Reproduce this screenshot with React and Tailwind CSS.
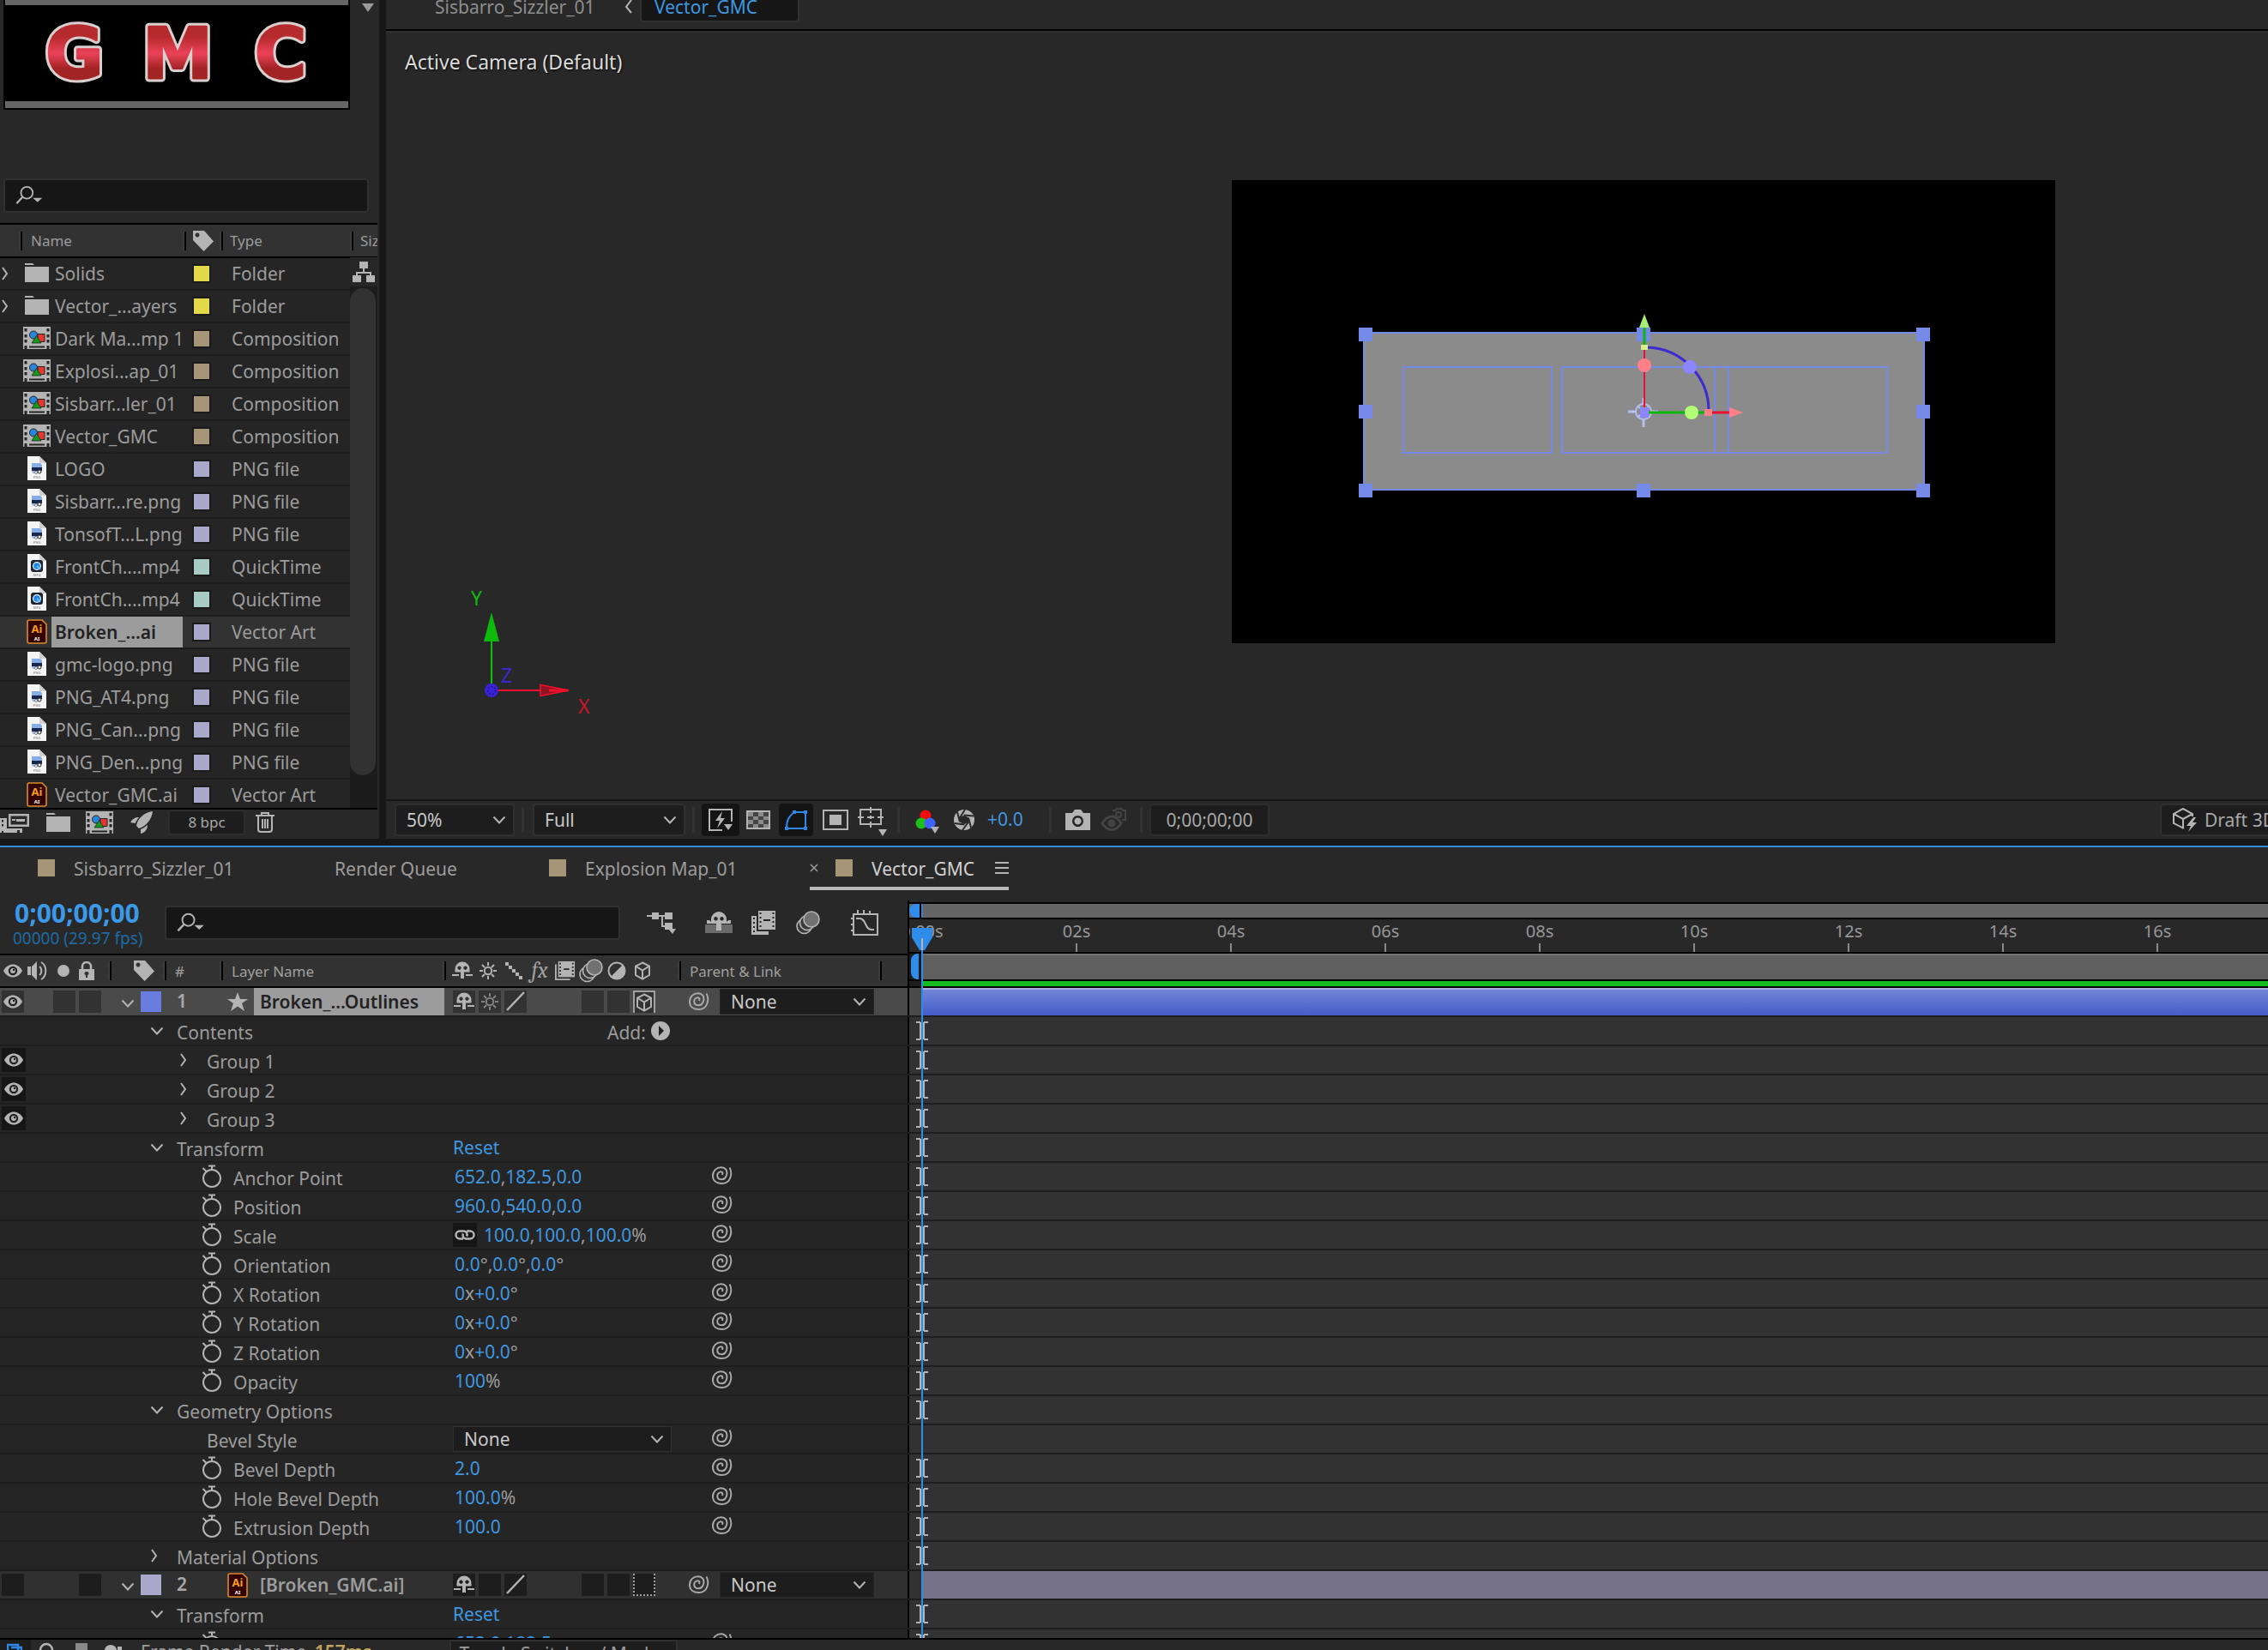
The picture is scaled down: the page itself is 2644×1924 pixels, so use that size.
import { useState } from "react";

const projectItems = [
  { name: "Solids", kind: "folder", color: "bg-[#e2d84a]", type: "Folder" },
  { name: "Vector_...ayers", kind: "folder", color: "bg-[#e2d84a]", type: "Folder" },
  { name: "Dark Ma...mp 1", kind: "comp", color: "bg-[#a79577]", type: "Composition" },
  { name: "Explosi...ap_01", kind: "comp", color: "bg-[#a79577]", type: "Composition" },
  { name: "Sisbarr...ler_01", kind: "comp", color: "bg-[#a79577]", type: "Composition" },
  { name: "Vector_GMC", kind: "comp", color: "bg-[#a79577]", type: "Composition" },
  { name: "LOGO", kind: "png", color: "bg-[#aaa8ca]", type: "PNG file" },
  { name: "Sisbarr...re.png", kind: "png", color: "bg-[#aaa8ca]", type: "PNG file" },
  { name: "TonsofT...L.png", kind: "png", color: "bg-[#aaa8ca]", type: "PNG file" },
  { name: "FrontCh....mp4", kind: "mp4", color: "bg-[#a9cbc6]", type: "QuickTime" },
  { name: "FrontCh....mp4", kind: "mp4", color: "bg-[#a9cbc6]", type: "QuickTime" },
  { name: "Broken_...ai", kind: "ai", color: "bg-[#aaa8ca]", type: "Vector Art" },
  { name: "gmc-logo.png", kind: "png", color: "bg-[#aaa8ca]", type: "PNG file" },
  { name: "PNG_AT4.png", kind: "png", color: "bg-[#aaa8ca]", type: "PNG file" },
  { name: "PNG_Can...png", kind: "png", color: "bg-[#aaa8ca]", type: "PNG file" },
  { name: "PNG_Den...png", kind: "png", color: "bg-[#aaa8ca]", type: "PNG file" },
  { name: "Vector_GMC.ai", kind: "ai", color: "bg-[#aaa8ca]", type: "Vector Art" },
];

// even parts of a value are editable (blue), odd parts are units and separators
const properties = [
  { label: "Contents", level: 0, open: true, add: true },
  { label: "Group 1", level: 1, open: false, eye: true },
  { label: "Group 2", level: 1, open: false, eye: true },
  { label: "Group 3", level: 1, open: false, eye: true },
  { label: "Transform", level: 0, open: true, reset: true },
  { label: "Anchor Point", level: 2, value: ["652.0", ",", "182.5", ",", "0.0"] },
  { label: "Position", level: 2, value: ["960.0", ",", "540.0", ",", "0.0"] },
  { label: "Scale", level: 2, linked: true, value: ["100.0", ",", "100.0", ",", "100.0", "%"] },
  { label: "Orientation", level: 2, value: ["0.0", "°,", "0.0", "°,", "0.0", "°"] },
  { label: "X Rotation", level: 2, value: ["0", "x", "+0.0", "°"] },
  { label: "Y Rotation", level: 2, value: ["0", "x", "+0.0", "°"] },
  { label: "Z Rotation", level: 2, value: ["0", "x", "+0.0", "°"] },
  { label: "Opacity", level: 2, value: ["100", "%"] },
  { label: "Geometry Options", level: 0, open: true },
  { label: "Bevel Style", level: 1, select: true, noKey: true },
  { label: "Bevel Depth", level: 2, value: ["2.0"] },
  { label: "Hole Bevel Depth", level: 2, value: ["100.0", "%"] },
  { label: "Extrusion Depth", level: 2, value: ["100.0"] },
  { label: "Material Options", level: 0, open: false },
];

const times = ["0:00s", "02s", "04s", "06s", "08s", "10s", "12s", "14s", "16s"];

/* ---------- icons ---------- */

function Chevron({ open, className = "" }) {
  return open ? (
    <svg width="16" height="16" viewBox="0 0 16 16" className={className} fill="none" stroke="#b4b4b4" strokeWidth="2">
      <path d="M1.500 4.500 8 11.500l6.500-7" />
    </svg>
  ) : (
    <svg width="16" height="16" viewBox="0 0 16 16" className={className} fill="none" stroke="#b4b4b4" strokeWidth="2">
      <path d="M3 1l5 7-5 7" />
    </svg>
  );
}

function SearchIcon() {
  return (
    <svg width="36" height="24" viewBox="0 0 36 24" fill="none" stroke="#b4b4b4" strokeWidth="2">
      <circle cx="14.500" cy="8.500" r="7.500" />
      <path d="M9 14l-7.500 8" strokeWidth="2.500" />
      <path d="M22 15h12l-6 5.500z" fill="#b4b4b4" stroke="none" />
    </svg>
  );
}

function TagIcon() {
  return (
    <svg width="24" height="24" viewBox="0 0 24 24" fill="#b4b4b4" fillRule="evenodd">
      <path d="M0 0h13l11 12.500L12.500 24 0 11zM5 2.500a2.500 2.500 0 1 0 .01 0z" />
    </svg>
  );
}

function FolderIcon() {
  return (
    <svg width="28" height="22" viewBox="0 0 28 22" fill="#b4b4b4">
      <path d="M0 0h9l2 2H0zM0 4h28v18H0z" />
    </svg>
  );
}

function CompIcon() {
  return (
    <svg width="32" height="26" viewBox="0 0 32 26">
      <path d="M0 0h32v26H0z" fill="#b4b4b4" />
      <path
        d="M1.500 2h3v3.500h-3zM1.500 9h3v3.500h-3zM1.500 15h3v3.500h-3zM1.500 22h3v4h-3zM27.500 2h3v3.500h-3zM27.500 9h3v3.500h-3zM27.500 15h3v3.500h-3zM27.500 22h3v4h-3zM7 22.500h18v2H7z"
        fill="#252525"
      />
      <path d="M17 8.500h8v9h-8z" fill="#e5372f" stroke="#252525" />
      <circle cx="12" cy="9.500" r="4.500" fill="#2b84dc" stroke="#252525" />
      <path d="M15.500 10.500l5.500 8.500H10z" fill="#129a1c" stroke="#252525" strokeWidth=".8" />
    </svg>
  );
}

function FileIcon({ kind }) {
  return (
    <svg width="22" height="28" viewBox="0 0 22 28">
      <path d="M0 0h14l8 8v20H0z" fill="#f4f4f4" />
      <path d="M14 0v8h8z" fill="#cfcfcf" />
      {kind === "png" ? (
        <g>
          <path d="M5 8h10l2 2v3H5z" fill="#86aee6" />
          <path d="M5 13h12v4H5z" fill="#16264f" />
          <path d="M5 17h7v3H6z" fill="#9db9e0" />
          <circle cx="14" cy="18" r="2" fill="#fff" stroke="#222" />
          <circle cx="10" cy="19" r="1.500" fill="#fff" stroke="#555" strokeWidth=".7" />
        </g>
      ) : (
        <g>
          <rect x="4" y="7" width="14" height="14" rx="3" fill="#1c2430" />
          <circle cx="11" cy="14" r="5" fill="#eef4fb" />
          <circle cx="11" cy="14" r="3.800" fill="#1d86e8" />
          <path d="M11 14l4 4" stroke="#5cc3ff" strokeWidth="2" />
        </g>
      )}
      <text x="11" y="26" fontSize="4" textAnchor="middle" fill="#777">
        {kind === "png" ? "PNG" : "MP4"}
      </text>
    </svg>
  );
}

function AiIcon() {
  return (
    <svg width="24" height="29" viewBox="0 0 24 29">
      <path d="M3 1h15l5 5v20a2 2 0 0 1-2 2H3a2 2 0 0 1-2-2V3a2 2 0 0 1 2-2z" fill="#330303" stroke="#d98b2e" strokeWidth="1.600" />
      <text x="12" y="16" fontSize="13" fontWeight="700" textAnchor="middle" fill="#f79a1e">Ai</text>
      <text x="12" y="25" fontSize="6" fontWeight="700" textAnchor="middle" fill="#fff">AI</text>
    </svg>
  );
}

function ItemIcon({ kind }) {
  if (kind === "folder") return <FolderIcon />;
  if (kind === "comp") return <CompIcon />;
  if (kind === "ai") return <AiIcon />;
  return <FileIcon kind={kind} />;
}

function EyeIcon() {
  return (
    <svg width="22" height="16" viewBox="0 0 22 16">
      <path d="M0 8C3 2.500 7 .5 11 .5S19 2.500 22 8c-3 5.500-7 7.500-11 7.500S3 13.500 0 8z" fill="#b4b4b4" />
      <circle cx="11" cy="8" r="5.200" fill="#222" />
      <circle cx="11" cy="8" r="3" fill="#b4b4b4" />
      <circle cx="12" cy="7" r="1.200" fill="#222" />
    </svg>
  );
}

function ShyIcon() {
  return (
    <svg width="24" height="22" viewBox="0 0 24 22" fill="#b4b4b4" fillRule="evenodd">
      <path d="M3.500 12.500V9a8.500 8.500 0 0 1 17 0v3.500H14V20h-4v-7.500zM8.500 5.500a2.200 2.200 0 1 0 .01 0zM15.500 5.500a2.200 2.200 0 1 0 .01 0z" />
      <path d="M0 15h8v2H0zM16 15h8v2h-8z" />
    </svg>
  );
}

function SunIcon({ dim }) {
  return (
    <svg width="22" height="22" viewBox="0 0 22 22" fill="none" stroke={dim ? "#828282" : "#b4b4b4"} strokeWidth="2">
      <circle cx="11" cy="11" r="4.200" />
      <path d="M11 1v4M11 17v4M1 11h4M17 11h4M4 4l3 3M15 15l3 3M4 18l3-3M15 7l3-3" />
    </svg>
  );
}

function FilmIcon() {
  return (
    <svg width="24" height="24" viewBox="0 0 26 26">
      <path d="M1 5v19h18" fill="none" stroke="#b4b4b4" strokeWidth="2" />
      <path d="M4 1h21v20H4z" fill="#b4b4b4" />
      <path d="M5.500 3h2v2h-2zM5.500 7.500h2v2h-2zM5.500 12h2v2h-2zM5.500 16.500h2v2h-2zM21.500 3h2v2h-2zM21.500 7.500h2v2h-2zM21.500 12h2v2h-2zM21.500 16.500h2v2h-2zM11 10h7v2h-7z" fill="#252525" />
    </svg>
  );
}

function BlurIcon() {
  return (
    <svg width="28" height="28" viewBox="0 0 28 28" fill="#3a3a3a" stroke="#b4b4b4" strokeWidth="1.600">
      <circle cx="9.500" cy="18" r="8.500" />
      <circle cx="13" cy="14" r="8.500" />
      <circle cx="18" cy="10" r="9" fill="#727272" />
    </svg>
  );
}

function CubeIcon() {
  return (
    <svg width="20" height="22" viewBox="0 0 20 22" fill="none" stroke="#b4b4b4" strokeWidth="2">
      <path d="M10 1.500l8 4v10.500l-8 4.500-8-4.500V5.500zM2 5.500l8 5 8-5M10 10.500v10" />
    </svg>
  );
}

function SpiralIcon() {
  return (
    <svg width="24" height="22" viewBox="0 0 24 22" fill="none" stroke="#a8a8a8" strokeWidth="2">
      <path d="M20.500 1.500c3.500 6 2 18.500-9 18.500C4.500 20 1 16 1 11 1 5 5.500 1.200 10.500 1.200c5.500 0 7.500 4 6.800 8-.8 4-3.300 6-6.300 6-3 0-4.800-2-4.800-4.600 0-2.600 2-4.400 4.300-4.400 2 0 2.300 1.800 1.500 3.800" />
    </svg>
  );
}

function Stopwatch() {
  return (
    <svg width="24" height="28" viewBox="0 0 24 28" fill="none" stroke="#b4b4b4" strokeWidth="2">
      <circle cx="12" cy="16" r="10" />
      <path d="M8 1.500h8M12 1.500V6M1.500 4l4 4" />
    </svg>
  );
}

function DownTri() {
  return (
    <svg width="10" height="8" viewBox="0 0 10 8" className="absolute -right-1 -bottom-1">
      <path d="M0 0h10L5 8z" fill="#b4b4b4" />
    </svg>
  );
}

function Logo() {
  const letters = (
    <>
      <text x="81" y="85">G</text>
      <text x="201" y="85">M</text>
      <text x="321" y="85">C</text>
    </>
  );
  return (
    <svg width="400" height="112" viewBox="0 0 400 112" className="block bg-black">
      <defs>
        <linearGradient id="logoRed" gradientUnits="userSpaceOnUse" x1="0" y1="24" x2="0" y2="86">
          <stop offset="20%" stopColor="#b52a2c" />
          <stop offset="52%" stopColor="#ea4258" />
          <stop offset="80%" stopColor="#a32425" />
        </linearGradient>
      </defs>
      <g fontFamily="DejaVu Sans" fontWeight="700" fontSize="82" textAnchor="middle" strokeLinejoin="round">
        <g fill="#d9cfcf" stroke="#d9cfcf" strokeWidth="9">{letters}</g>
        <g fill="url(#logoRed)" stroke="url(#logoRed)" strokeWidth="3">{letters}</g>
      </g>
    </svg>
  );
}

/* ---------- shared bits ---------- */

function Sep() {
  return <span className="h-[22px] w-1 shrink-0 border-r-2 border-l-2 border-r-black border-l-[#3c3c3c]" />;
}

function Dropdown({ label, value, options, className }) {
  const [current, setCurrent] = useState(value);
  return (
    <div className={`relative shrink-0 bg-[#1d1d1d] ${className}`}>
      <select
        aria-label={label}
        value={current}
        onChange={(e) => setCurrent(e.target.value)}
        className="h-full w-full appearance-none bg-transparent px-3 text-[21px] leading-7 text-[#c8c8c8] outline-none"
      >
        {options.map((o) => (
          <option key={o}>{o}</option>
        ))}
      </select>
      <Chevron open className="pointer-events-none absolute top-1/2 right-2 -translate-y-1/2" />
    </div>
  );
}

/* ---------- project panel ---------- */

function ProjectPanel() {
  const [selected, setSelected] = useState(11);
  return (
    <aside className="flex w-[442px] shrink-0 flex-col overflow-hidden bg-[#282828]">
      <div className="flex items-start gap-3.5 pl-1">
        <div className="border-x-2 border-b-2 border-black">
          <div className="h-1.5 bg-[#666]" />
          <Logo />
          <div className="h-2 bg-[#666]" />
        </div>
        <svg width="14" height="10" viewBox="0 0 14 10" className="mt-1">
          <path d="M0 0h14L7 10z" fill="#9a9a9a" />
        </svg>
      </div>

      <label className="mt-20 mr-3 ml-1 flex h-10 items-center rounded border-2 border-[#303030] bg-[#161616] pl-3">
        <SearchIcon />
        <input aria-label="Search project" className="w-full bg-transparent text-[21px] text-[#c8c8c8] outline-none" />
      </label>

      <div className="relative mt-3 mr-0.5 h-[684px] overflow-hidden border-y-2 border-black">
        <table className="w-full table-fixed border-collapse text-left text-[21px] text-[#9c9c9c]">
          <colgroup>
            <col className="w-[213px]" />
            <col className="w-[43px]" />
            <col className="w-[152px]" />
            <col />
          </colgroup>
          <thead>
            <tr className="h-[38px] border-b-2 border-black bg-[#323232] text-[17px]">
              <th className="p-0 font-normal">
                <div className="flex items-center gap-2.5 pl-[22px]"><Sep />Name</div>
              </th>
              <th className="p-0" aria-label="Label">
                <div className="flex items-center gap-2"><Sep /><TagIcon /></div>
              </th>
              <th className="p-0 font-normal">
                <div className="flex items-center gap-2"><Sep />Type</div>
              </th>
              <th className="p-0 font-normal">
                <div className="flex items-center gap-2 overflow-hidden"><Sep />Size</div>
              </th>
            </tr>
          </thead>
          <tbody>
            {projectItems.map((item, i) => (
              <tr
                key={i}
                onClick={() => setSelected(i)}
                className={`h-[38px] ${i === selected ? "bg-[#323232]" : "bg-[#252525]"}`}
              >
                <td className="border-b-2 border-[#1d1d1d] p-0">
                  <div className="flex h-9 items-center whitespace-nowrap">
                    <span className="w-[22px] shrink-0">
                      {item.kind === "folder" && <Chevron />}
                    </span>
                    <span className="flex w-[38px] shrink-0 items-center justify-center pl-1 pb-0.5"><ItemIcon kind={item.kind} /></span>
                    <span
                      className={`h-full grow overflow-hidden pl-1 leading-9 ${
                        i === selected ? "bg-[#9c9c9c] font-semibold text-[#222]" : ""
                      }`}
                    >
                      {item.name}
                    </span>
                  </div>
                </td>
                <td className="border-b-2 border-[#1d1d1d] p-0 pl-[11px]">
                  <div className={`size-[22px] border-2 border-[#1a1a1a] ${item.color}`} />
                </td>
                <td className="border-b-2 border-[#1d1d1d] p-0 pl-[14px] leading-8 whitespace-nowrap">{item.type}</td>
                <td className="bg-[#1c1c1c] p-0" />
              </tr>
            ))}
          </tbody>
        </table>
        <div className="absolute top-[38px] right-0 w-8">
          <div className="flex h-[34px] items-center justify-center bg-[#262626]">
            <svg width="26" height="24" viewBox="0 0 26 24" fill="#b4b4b4">
              <path d="M8 0h10v8H8zM0 16h10v8H0zM16 16h10v8H16zM12 8h2v4h8v4h-2v-2H6v2H4v-4h8z" />
            </svg>
          </div>
          <div className="mt-0.5 mr-0.5 h-[568px] rounded-full bg-[#323232]" />
        </div>
      </div>

      <div className="flex h-[34px] items-center pb-1">
        <button aria-label="Interpret footage" className="w-[54px]">
          <svg width="34" height="24" viewBox="0 0 34 24" fill="#b4b4b4" fillRule="evenodd">
            <path d="M10 2h24v15H10zM12.500 4.500v10h19v-10zM14 8h4v2h-4zM19 8h10v3H19zM0 7h8v12h18v5h-3v-3h-3v3H4v-2H2v2H0zM2 9v2.500h2V9zM2 14v2.500h2V14z" />
          </svg>
        </button>
        <button aria-label="New folder" className="w-[46px]"><FolderIcon /></button>
        <button aria-label="New composition" className="w-[52px]"><CompIcon /></button>
        <button aria-label="Project settings" className="w-11">
          <svg width="26" height="26" viewBox="0 0 26 26" fill="#b4b4b4">
            <path d="M26 0C16 1 8 9 7 17l3 3C19 17 25 9 26 0zM0 13c3-5 6-6 10-6-2 3-4 5-4 7zM12 26v-5c3-1 5-3 8-5 0 5-3 9-8 10z" />
          </svg>
        </button>
        <button className="mr-3 h-[30px] w-[90px] rounded border-2 border-[#2d2d2d] bg-[#1d1d1d] text-[17px] leading-6 text-[#a8a8a8]">
          8 bpc
        </button>
        <button aria-label="Delete">
          <svg width="22" height="24" viewBox="0 0 22 24" fill="none" stroke="#b4b4b4" strokeWidth="2">
            <path d="M0 4h22M7 4V1h8v3M3 4v16a3 3 0 0 0 3 3h10a3 3 0 0 0 3-3V4M8 8v11M11 8v11M14 8v11" />
          </svg>
        </button>
      </div>
    </aside>
  );
}

/* ---------- viewer ---------- */

function Handle({ x, y }) {
  return <rect x={x - 8} y={y - 8} width="16" height="16" fill="#7489e8" />;
}

function Stage() {
  return (
    <svg width="960" height="540" viewBox="0 0 960 540" className="absolute top-[174px] left-[986px] bg-black">
      <rect x="154" y="178" width="653" height="183" fill="#8b8b8b" stroke="#7489e8" strokeWidth="2" />
      <g fill="none" stroke="#7489e8" strokeWidth="2">
        <rect x="200" y="218" width="173" height="100" />
        <rect x="385" y="218" width="194" height="100" />
        <rect x="563" y="218" width="201" height="100" />
      </g>
      {[156, 480, 806].map((x) =>
        [180, 270, 362].map((y) => (x === 480 && y === 270 ? null : <Handle key={x + "-" + y} x={x} y={y} />))
      )}
      <g fill="none" stroke="#b3bfee" strokeWidth="2">
        <circle cx="480" cy="270" r="9" />
        <path d="M480 254v8M480 278v10M462 270h9M489 270h8" strokeWidth="3" />
        <path d="M473 263l4 4M487 263l-4 4M473 277l4-4M487 277l-4-4" />
      </g>
      <path d="M484 195a74 74 0 0 1 72 74" fill="none" stroke="#3e2bd0" strokeWidth="3" />
      <path d="M481 198v70" stroke="#e8112d" strokeWidth="2" />
      <path d="M481 172v24" stroke="#0cb70c" strokeWidth="3" />
      <path d="M481 156l6 16h-12z" fill="#a6ec75" />
      <path d="M477 192h8v6h-8z" fill="#d7f08a" />
      <path d="M486 271h70" stroke="#0cb70c" strokeWidth="3" />
      <path d="M551 267h9v8h-9z" fill="#ff8086" />
      <path d="M560 271h20" stroke="#e8112d" strokeWidth="3" />
      <path d="M580 265l16 6-16 6z" fill="#ff8086" />
      <circle cx="481" cy="216" r="8" fill="#ff8086" />
      <circle cx="534" cy="218" r="8" fill="#8c85ff" />
      <circle cx="536" cy="271" r="8" fill="#b2ff77" />
      <path d="M476 265h10v12h-10z" fill="#8c85ff" />
    </svg>
  );
}

function AxisWidget() {
  return (
    <svg width="160" height="160" viewBox="0 0 160 160" className="absolute top-[644px] left-[90px]" fontSize="23">
      <path d="M33 62v56" stroke="#0cc30c" strokeWidth="2" />
      <path d="M33 34l9 34H24z" fill="#0cb90c" />
      <path d="M36 125h54" stroke="#f2102c" strokeWidth="2" />
      <path d="M90 118.500l33 6.500-33 6.500z" fill="#8f1522" stroke="#f2102c" strokeWidth="1.500" />
      <path d="M100 125h22" stroke="#f2102c" strokeWidth="3" />
      <circle cx="33" cy="125" r="8" fill="#3a21dc" />
      <circle cx="33" cy="125" r="4.500" fill="none" stroke="#201672" strokeWidth="1.500" strokeDasharray="2 2" />
      <text x="9" y="26" fill="#0cb90c">Y</text>
      <text x="44" y="116" fill="#3a29d0">Z</text>
      <text x="134" y="152" fill="#c9142b">X</text>
    </svg>
  );
}

function Divider() {
  return <span className="h-[30px] w-[3px] shrink-0 bg-[#323232]" />;
}

function ViewerToolbar() {
  return (
    <div className="flex h-[46px] shrink-0 items-center border-t-2 border-[#171717] pl-2.5">
      <Dropdown label="Magnification" value="50%" options={["25%", "50%", "100%"]} className="h-[38px] w-[140px] rounded border-2 border-[#303030]" />
      <span className="w-2" />
      <Divider />
      <span className="w-2.5" />
      <Dropdown label="Resolution" value="Full" options={["Full", "Half", "Third"]} className="h-[38px] w-[178px] rounded border-2 border-[#303030]" />
      <span className="w-2" />
      <Divider />
      <div className="flex items-center gap-2 pl-2">
        <button aria-label="Fast previews" className="flex h-[38px] w-11 items-center justify-center rounded bg-[#141414]">
          <svg width="30" height="26" viewBox="0 0 30 26" fill="none" stroke="#b4b4b4" strokeWidth="2">
            <path d="M17 25H2V1h26v14" />
            <path d="M17 3l-8 11h5l-3 9 9-12h-5z" fill="#b4b4b4" stroke="none" />
            <path d="M19 18h10l-5 7z" fill="#b4b4b4" stroke="none" />
          </svg>
        </button>
        <button aria-label="Toggle transparency grid" className="w-[30px]">
          <svg width="28" height="22" viewBox="0 0 28 22">
            <path d="M1 1h26v20H1z" fill="#444" stroke="#b4b4b4" strokeWidth="2" />
            <path d="M2 2h6v5H2zM14 2h6v5h-6zM8 7h6v4H8zM20 7h6v4h-6zM2 11h6v5H2zM14 11h6v5h-6zM8 16h6v4H8zM20 16h6v4h-6z" fill="#8a8a8a" />
          </svg>
        </button>
        <button aria-label="Toggle mask visibility" className="flex h-[38px] w-10 items-center justify-center rounded bg-[#141414]">
          <svg width="30" height="26" viewBox="0 0 30 26" fill="none" stroke="#2f88e6" strokeWidth="2">
            <path d="M13 4h13v19H4c0-9 2-14 9-19z" />
            <path d="M11 2h4v4h-4zM24 2h4v4h-4zM24 21h4v4h-4zM2 21h4v4H2z" fill="#2f88e6" stroke="none" />
          </svg>
        </button>
        <button aria-label="Region of interest" className="flex w-9 justify-center">
          <svg width="30" height="24" viewBox="0 0 30 24" fill="none" stroke="#b4b4b4" strokeWidth="2">
            <path d="M1 1h28v22H1z" />
            <path d="M9 7h12v10H9z" fill="#b4b4b4" />
          </svg>
        </button>
        <button aria-label="Guide options" className="relative w-[30px] pb-1">
          <svg width="30" height="26" viewBox="0 0 30 26" fill="none" stroke="#b4b4b4" strokeWidth="2">
            <path d="M3 3h24v17H3zM15 0v7M15 10v4M15 17v7M0 12h7M11 12h8M23 12h7" />
          </svg>
          <DownTri />
        </button>
      </div>
      <span className="w-4" />
      <Divider />
      <button aria-label="Show channel" className="relative mr-5 ml-[18px]">
        <svg width="24" height="24" viewBox="0 0 24 24">
          <circle cx="12" cy="7" r="6.500" fill="#f30d0d" />
          <circle cx="7" cy="16" r="6.500" fill="#1fc01a" />
          <circle cx="17" cy="16" r="6.500" fill="#3f62ff" />
        </svg>
        <DownTri />
      </button>
      <button aria-label="Reset exposure" className="mr-3.5">
        <svg width="26" height="26" viewBox="0 0 26 26">
          <circle cx="13" cy="13" r="12" fill="#b4b4b4" />
          <path d="M13 7.500l5 3v5l-5 3-5-3v-5z" fill="#282828" />
          <path d="M8 10.500L14 1M13 7.500l11 1M18 10.500L21 22M18 15.500L11 25M13 18.500L2 17M8 15.500L5 4" stroke="#282828" strokeWidth="2" fill="none" />
        </svg>
      </button>
      <span className="w-[72px] text-[21px] text-[#3f97e0]">+0.0</span>
      <Divider />
      <button aria-label="Take snapshot" className="mr-3 ml-4">
        <svg width="29" height="24" viewBox="0 0 29 24" fill="#b4b4b4" fillRule="evenodd">
          <path d="M0 4h8l3-4h7l3 4h8v20H0zM14.500 7a6.500 6.500 0 1 0 .01 0zM14.500 9.500a4 4 0 1 1-.01 0z" />
        </svg>
      </button>
      <button aria-label="Show snapshot" disabled className="mr-4">
        <svg width="30" height="28" viewBox="0 0 30 28" fill="none" stroke="#444" strokeWidth="3">
          <path d="M14 3h3l2-2h5l2 2h3v11h-4" strokeWidth="2" />
          <circle cx="21" cy="8" r="3" strokeWidth="2" />
          <path d="M2 18c3-5 7-8 11-8s8 3 11 8c-3 5-7 7.500-11 7.500S5 23 2 18z" />
          <circle cx="13" cy="18" r="3" fill="#444" />
        </svg>
      </button>
      <Divider />
      <button className="ml-2 h-[38px] w-[140px] rounded border-2 border-[#2d2d2d] bg-[#1d1d1d] text-[21px] leading-8 text-[#a8a8a8]">
        0;00;00;00
      </button>
      <button className="-mr-5 ml-auto flex h-[38px] w-[146px] items-center gap-2 rounded border-2 border-[#303030] bg-[#1d1d1d] pl-3 text-[21px] leading-8 whitespace-nowrap text-[#a8a8a8]">
        <svg width="30" height="28" viewBox="0 0 30 28" className="shrink-0" fill="none" stroke="#b4b4b4" strokeWidth="2">
          <path d="M14 24L2 18V7l11-6 11 6v3M2 7l11 6 11-6M13 13v11" />
          <path d="M25 11l-8 10h5l-3 7 10-11h-5l4-6z" fill="#b4b4b4" stroke="none" />
        </svg>
        Draft 3D
      </button>
    </div>
  );
}

function Viewer() {
  return (
    <main className="flex min-w-0 grow flex-col overflow-hidden bg-[#282828]">
      <nav className="flex h-[34px] shrink-0 items-start pl-[57px] text-[21px] leading-4 text-[#8e8e8e]">
        <a href="#sizzler" className="w-[189px]">Sisbarro_Sizzler_01</a>
        <svg width="10" height="18" viewBox="0 0 10 18" className="mr-2 ml-8" fill="none" stroke="#b4b4b4" strokeWidth="2">
          <path d="M8 0L2 8l6 7" />
        </svg>
        <a href="#vector" className="h-[26px] w-[186px] rounded-b border-2 border-t-0 border-[#303030] bg-[#161616] pl-[15px] text-[#3f97e0]">
          Vector_GMC
        </a>
      </nav>
      <div className="relative grow border-t-2 border-black">
        <div className="border-t-2 border-[#303030] pt-4 pl-[22px] text-[23px] leading-9 text-[#dcdcdc] [text-shadow:1px_1px_2px_#000]">
          Active Camera (Default)
        </div>
        <Stage />
        <AxisWidget />
      </div>
      <ViewerToolbar />
    </main>
  );
}

/* ---------- timeline ---------- */

function Tab({ name, active, className = "" }) {
  return (
    <button className={`flex h-12 items-center border-b-4 ${active ? "border-[#b8b8b8] text-[#d2d2d2]" : "border-transparent"} ${className}`}>
      {active && (
        <svg width="10" height="10" viewBox="0 0 10 10" className="mr-5" stroke="#9c9c9c" strokeWidth="1.500">
          <path d="M1 1l8 8M9 1l-8 8" />
        </svg>
      )}
      {name !== "Render Queue" && <span className="mr-[22px] size-5 bg-[#a79577]" />}
      <span className="pt-1">{name}</span>
      {active && (
        <svg width="16" height="16" viewBox="0 0 16 16" className="ml-6" stroke="#b4b4b4" strokeWidth="2">
          <path d="M0 2h16M0 8h16M0 14h16" />
        </svg>
      )}
    </button>
  );
}

function TimelineTabs() {
  return (
    <div className="flex h-[62px] shrink-0 items-start pt-0.5 pl-11 text-[21px] text-[#9c9c9c]">
      <Tab name="Sisbarro_Sizzler_01" className="w-[346px]" />
      <Tab name="Render Queue" className="w-[250px]" />
      <Tab name="Explosion Map_01" className="w-[304px]" />
      <Tab name="Vector_GMC" active />
    </div>
  );
}

function TimelineControls() {
  return (
    <div className="flex h-[62px] items-start">
      <div className="w-[192px] pl-[15px] whitespace-nowrap">
        <div className="pl-0.5 text-[30px] leading-[30px] font-bold text-[#3c99e8]">0;00;00;00</div>
        <div className="text-[19px] leading-7 text-[#1d6ba3]">00000 (29.97 fps)</div>
      </div>
      <label className="mt-1.5 flex h-10 w-[531px] items-center rounded border-2 border-[#303030] bg-[#161616] pl-3">
        <SearchIcon />
        <input aria-label="Search layers" className="w-full bg-transparent text-[21px] text-[#c8c8c8] outline-none" />
      </label>
      <div className="mt-1.5 flex h-10 items-center pl-[31px]">
        <button aria-label="Composition mini-flowchart" className="relative mr-8">
          <svg width="36" height="26" viewBox="0 0 36 26" fill="#b4b4b4">
            <path d="M0 4h6V1h8v3h7V1h9v8h-9V6h-2v10h2v-3h9v8h-9v-3h-4V6h-3v3H6V6H0zM25 20h9l-4 6z" />
          </svg>
        </button>
        <button aria-label="Hide shy layers" className="mr-[22px]">
          <svg width="32" height="26" viewBox="0 0 32 26">
            <path d="M0 15h32v10H0z" fill="#6b6b6b" />
            <path d="M2 10h3l2 2V9a9 9 0 0 1 18 0v3l2-2h3v4H19v8h-6v-8H2zM12.500 6a2.300 2.300 0 1 0 .01 0zM19.500 6a2.300 2.300 0 1 0 .01 0z" fill="#b4b4b4" fillRule="evenodd" />
          </svg>
        </button>
        <button aria-label="Frame blending" className="mr-6">
          <svg width="28" height="28" viewBox="0 0 28 28">
            <path d="M0 6h6v18h14v4H0zM2 8v2h2V8zM2 13v2h2v-2zM2 18v2h2v-2zM2 23v2h2v-2z" fill="#b4b4b4" fillRule="evenodd" />
            <path d="M8 0h20v22H8z" fill="#b4b4b4" />
            <path d="M9.500 2h2v2h-2zM9.500 7h2v2h-2zM9.500 12h2v2h-2zM9.500 17h2v2h-2zM24.500 2h2v2h-2zM24.500 7h2v2h-2zM24.500 12h2v2h-2zM24.500 17h2v2h-2zM14 10h8v2h-8z" fill="#252525" />
          </svg>
        </button>
        <button aria-label="Motion blur" className="mr-9"><BlurIcon /></button>
        <button aria-label="Graph editor">
          <svg width="32" height="30" viewBox="0 0 32 30" fill="none" stroke="#b4b4b4" strokeWidth="2">
            <path d="M3 5h28v24H3zM8 5V0M15 5V0M22 5V1M3 10H0M3 17H0M3 24H0M6 10h4c8 0 6 13 14 13h3" />
          </svg>
        </button>
      </div>
    </div>
  );
}

function HeadIcon({ children }) {
  return <span className="flex w-[30px] shrink-0 items-center justify-center">{children}</span>;
}

function TimelineHeader() {
  return (
    <div className="flex h-10 items-center border-y-2 border-black bg-[#323232] text-[17px] text-[#a0a0a0]">
      <div className="flex w-[126px] shrink-0 items-center gap-1.5 pl-1">
        <EyeIcon />
        <svg width="24" height="22" viewBox="0 0 24 22" fill="#b4b4b4">
          <path d="M0 6h4v10H0zM5 6l6-6v22l-6-6z" />
          <path d="M14 6c3 2 3 8 0 10M16 1c7 4 7 16 0 20" fill="none" stroke="#b4b4b4" strokeWidth="2" />
        </svg>
        <svg width="24" height="14" viewBox="0 0 24 14"><circle cx="12" cy="7" r="7" fill="#b4b4b4" /></svg>
        <svg width="18" height="22" viewBox="0 0 18 22" fill="#b4b4b4" fillRule="evenodd">
          <path d="M0 9h18v13H0zM9 12a2 2 0 0 0-1 4v3h2v-3a2 2 0 0 0-1-4z" />
          <path d="M4 9V6a5 5 0 0 1 10 0v3" fill="none" stroke="#b4b4b4" strokeWidth="2.500" />
        </svg>
      </div>
      <Sep />
      <span className="flex w-[60px] justify-end pr-2.5"><TagIcon /></span>
      <Sep />
      <span className="w-[62px] pt-0.5 pl-2.5">#</span>
      <Sep />
      <span className="w-64 pt-0.5 pl-2.5">Layer Name</span>
      <Sep />
      <div className="flex w-[270px] shrink-0 items-center pl-1">
        <HeadIcon><ShyIcon /></HeadIcon>
        <HeadIcon><SunIcon /></HeadIcon>
        <HeadIcon>
          <svg width="20" height="20" viewBox="0 0 20 20" fill="#b4b4b4">
            <path d="M0 0h4v4H0zM4 4h4v4H4zM8 8h4v4H8zM12 12h4v4h-4zM16 16h4v4h-4z" />
          </svg>
        </HeadIcon>
        <HeadIcon><span className="font-serif text-[26px] leading-8 italic">fx</span></HeadIcon>
        <HeadIcon><FilmIcon /></HeadIcon>
        <HeadIcon><BlurIcon /></HeadIcon>
        <HeadIcon>
          <svg width="22" height="22" viewBox="0 0 22 22">
            <circle cx="11" cy="11" r="9.500" fill="none" stroke="#b4b4b4" strokeWidth="2" />
            <path d="M18 4A9.500 9.500 0 0 1 4 18z" fill="#b4b4b4" />
          </svg>
        </HeadIcon>
        <HeadIcon><CubeIcon /></HeadIcon>
      </div>
      <Sep />
      <span className="w-[230px] pt-0.5 pl-2.5">Parent &amp; Link</span>
      <Sep />
    </div>
  );
}

function Ruler() {
  return (
    <div className="min-w-0 grow overflow-hidden border-l-2 border-black bg-[#282828] pt-0.5">
      <div className="flex h-5 border-y-2 border-black bg-[#656565]">
        <span className="w-3 rounded-l-full bg-[#2f8ceb]" />
        <span className="w-1 border-r-2 border-l-2 border-l-black border-r-[#3c7fc4]" />
      </div>
      <div className="-ml-[75px] flex h-[38px] items-end">
        {times.map((t) => (
          <div key={t} className="flex w-[180px] shrink-0 flex-col items-center text-[20px] leading-6 text-[#979797]">
            {t}
            <span className="mt-0.5 h-2.5 w-0.5 bg-[#8a8a8a]" />
          </div>
        ))}
      </div>
      <div className="flex h-[34px] border-y-2 border-black bg-[#1d1d1d]">
        <span className="mr-1 ml-0.5 w-[9px] rounded-l-lg bg-[#2f8ceb]" />
        <span className="grow border-t-2 border-[#727272] bg-[#5f5f5f]" />
      </div>
      <div className="flex h-2 border-b-2 border-black bg-[#1d1d1d] pl-[15px]">
        <span className="grow bg-[#16bb22]" />
      </div>
    </div>
  );
}

function Cell({ dark, children, className = "" }) {
  return (
    <span className={`flex h-[26px] w-[26px] shrink-0 items-center justify-center ${dark ? "bg-[#1d1d1d]" : "bg-[#323232]"} ${className}`}>
      {children}
    </span>
  );
}

function LayerRow({ index, name, selected }) {
  const dark = !selected;
  return (
    <div className="flex h-[34px] shrink-0 border-b-2 border-[#1d1d1d]">
      <div className={`flex w-[1058px] shrink-0 items-center ${selected ? "bg-[#4a4a4a]" : "bg-[#303030]"}`}>
        <div className="flex w-[140px] items-center pl-0.5">
          <Cell dark={dark}>{selected && <EyeIcon />}</Cell>
          <span className="w-[34px]" />
          <Cell dark={dark} className={selected ? "" : "invisible"} />
          <span className="w-1" />
          <Cell dark={dark} />
        </div>
        <button aria-label="Collapse layer" className="w-6 pt-1 pl-px"><Chevron open /></button>
        <span className={`size-6 ${selected ? "bg-[#697de0]" : "bg-[#aaa8ca]"}`} />
        <span className="w-[74px] pl-[18px] text-[21px] font-semibold text-[#a8a8a8]">{index}</span>
        <span className="flex w-[34px] justify-center pr-1">
          {selected ? (
            <svg width="24" height="22" viewBox="0 0 24 22" fill="#b4b4b4">
              <path d="M12 0l3 8h9l-7 5 3 9-8-5.500L4 22l3-9-7-5h9z" />
            </svg>
          ) : (
            <AiIcon />
          )}
        </span>
        <span className={`h-8 w-[222px] pl-[7px] text-[21px] leading-8 font-semibold whitespace-nowrap ${selected ? "bg-[#9c9c9c] text-[#222]" : "text-[#9c9c9c]"}`}>
          {name}
        </span>
        <div className="flex w-[285px] items-center gap-1 pl-2.5">
          <Cell dark={dark}><ShyIcon /></Cell>
          <Cell dark={dark}>{selected && <SunIcon dim />}</Cell>
          <Cell dark={dark}>
            <svg width="24" height="24" viewBox="0 0 24 24" stroke="#b4b4b4" strokeWidth="2.500">
              <path d="M2 22L22 1" />
            </svg>
          </Cell>
          <span className="w-14" />
          <Cell dark={dark} />
          <Cell dark={dark} />
          {selected ? (
            <Cell className="border-2 border-b-0 border-[#a0a0a0]"><CubeIcon /></Cell>
          ) : (
            <Cell dark className="border-2 border-t-0 border-dotted border-[#a0a0a0]" />
          )}
        </div>
        <span className="w-9"><SpiralIcon /></span>
        <Dropdown label={`Parent of layer ${index}`} value="None" options={["None"]} className="h-[30px] w-[180px] border border-[#262626]" />
      </div>
      <div className={`flex grow border-l-2 border-black pl-[15px] ${selected ? "bg-[#4a4a4a]" : "bg-[#323232]"}`}>
        <span
          className={`grow ${
            selected ? "border-t-2 border-[#a9b0dc] bg-linear-to-b from-[#7186d8] to-[#465bc8]" : "bg-[#757289]"
          }`}
        />
      </div>
    </div>
  );
}

const indents = ["pl-[174px]", "pl-[208px]", "pl-[235px]"];

function PropertyRow({ item }) {
  return (
    <div className="flex h-[34px] shrink-0 border-b-2 border-[#1d1d1d] text-[21px] leading-7 text-[#9c9c9c]">
      <div className="relative flex w-[1058px] shrink-0 bg-[#252525]">
        {item.eye && (
          <button aria-label={`Toggle ${item.label}`} className="absolute top-0.5 left-0.5 flex h-7 w-7 items-center justify-center bg-[#161616]">
            <EyeIcon />
          </button>
        )}
        <div className={`flex w-[528px] shrink-0 items-center ${indents[item.level]}`}>
          {item.level === 2 ? (
            <button aria-label={`Animate ${item.label}`} className="w-[37px]"><Stopwatch /></button>
          ) : (
            <span className={item.level === 0 ? "w-8" : "w-[33px]"}>
              {item.open !== undefined && <Chevron open={item.open} className={item.open ? "ml-px" : ""} />}
            </span>
          )}
          <span className="pt-1">{item.label}</span>
        </div>
        <div className="flex w-[302px] items-center">
          {item.add && (
            <button className="ml-[180px] flex items-center gap-1.5">
              <span className="pt-1">Add:</span>
              <svg width="22" height="22" viewBox="0 0 22 22">
                <circle cx="11" cy="11" r="11" fill="#b4b4b4" />
                <path d="M9 5l6 6-6 6z" fill="#222" />
              </svg>
            </button>
          )}
          {item.reset && <button className="text-[#3f97e0]">Reset</button>}
          {item.linked && (
            <button aria-label="Constrain proportions" className="mr-2 flex h-7 w-7 items-center justify-center bg-[#161616]">
              <svg width="24" height="14" viewBox="0 0 24 14" fill="none" stroke="#b4b4b4" strokeWidth="2.500">
                <path d="M10 11.500H6a4.500 4.500 0 0 1 0-9h5a4 4 0 0 1 3 6M14 2.500h4a4.500 4.500 0 0 1 0 9h-5a4 4 0 0 1-3-6" />
              </svg>
            </button>
          )}
          {item.value && (
            <span className={item.linked ? "" : "pl-0.5"}>
              {item.value.map((part, i) => (
                <span key={i} className={i % 2 === 0 ? "text-[#3f97e0]" : ""}>{part}</span>
              ))}
            </span>
          )}
          {item.select && <Dropdown label={item.label} value="None" options={["None"]} className="h-[30px] w-[255px] border border-[#303030]" />}
        </div>
        {(item.value || item.select) && (
          <button aria-label={`Link ${item.label}`} className="pb-0.5"><SpiralIcon /></button>
        )}
      </div>
      <div className="flex grow items-center border-l-2 border-black bg-[#323232] pl-2">
        {!item.noKey && (
          <svg width="14" height="22" viewBox="0 0 14 22" stroke="#b4b4b4" strokeWidth="2">
            <path d="M0 1h5M9 1h5M0 21h5M9 21h5" />
            <path d="M7 1v20" strokeWidth="6" />
          </svg>
        )}
      </div>
    </div>
  );
}

function StatusBar() {
  return (
    <footer className="flex h-3.5 shrink-0 overflow-hidden border-t-2 border-black bg-[#282828] text-[21px] leading-7 text-[#9c9c9c]">
      <button aria-label="Toggle layer switches" className="w-9 shrink-0 bg-[#1d1d1d] pl-2">
        <svg width="18" height="14" viewBox="0 0 18 14" fill="none" stroke="#2f88e6" strokeWidth="2.500">
          <path d="M1 14V6h12v8M4 6V5" /><path d="M5 9h12v5" />
        </svg>
      </button>
      <svg width="118" height="12" viewBox="0 0 118 12" className="mr-2.5 shrink-0" fill="none" stroke="#b4b4b4" strokeWidth="2.500">
        <path d="M11 12a7 7 0 0 1 14 0" />
        <path d="M52 4h14v8H52z" fill="#8a8a8a" stroke="none" />
        <path d="M86 12a7 6 0 0 1 14 0zM101 8h5v4h-5z" fill="#b4b4b4" stroke="none" />
      </svg>
      <span className="w-[360px] shrink-0 whitespace-nowrap">
        Frame Render Time <b className="ml-1 font-semibold text-[#c0a35c]">157ms</b>
      </span>
      <button className="h-8 w-[266px] shrink-0 border-2 border-[#303030] bg-[#1d1d1d]">Toggle Switches / Modes</button>
    </footer>
  );
}

function Timeline() {
  return (
    <section className="flex min-h-0 grow flex-col overflow-hidden border-t-2 border-[#3689df] bg-[#282828]">
      <TimelineTabs />
      <div className="relative flex min-h-0 grow basis-0 flex-col overflow-hidden">
        <div className="flex shrink-0">
          <div className="w-[1058px] shrink-0">
            <TimelineControls />
            <TimelineHeader />
          </div>
          <Ruler />
        </div>
        <LayerRow index={1} name="Broken_...Outlines" selected />
        {properties.map((item) => (
          <PropertyRow key={item.label} item={item} />
        ))}
        <LayerRow index={2} name="[Broken_GMC.ai]" />
        <PropertyRow item={properties[4]} />
        <PropertyRow item={{ label: "Anchor Point", level: 2, value: ["652.0", ",", "182.5"] }} />

        {/* current time indicator */}
        <div className="pointer-events-none absolute top-8 bottom-0 left-[1063px] flex w-6 flex-col items-center">
          <svg width="24" height="26" viewBox="0 0 24 26" className="shrink-0">
            <path d="M0 0h24v11l-9 15H9L0 11z" fill="#2f8ceb" />
            <path d="M12 12v14" stroke="#b4b4b4" strokeWidth="2" />
          </svg>
          <span className="w-0.5 grow bg-[#2f8ceb]" />
        </div>
      </div>
      <StatusBar />
    </section>
  );
}

export default function App() {
  return (
    <div className="flex h-screen flex-col overflow-hidden bg-[#171717] font-['Noto_Sans',sans-serif] select-none">
      <div className="mb-2 flex shrink-0 gap-2">
        <ProjectPanel />
        <Viewer />
      </div>
      <Timeline />
    </div>
  );
}
